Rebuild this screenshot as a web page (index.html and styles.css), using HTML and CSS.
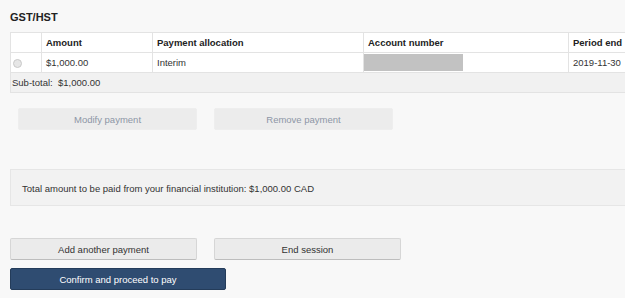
FILE: index.html
```html
<!DOCTYPE html>
<html lang="en">
<head>
    <meta charset="UTF-8">
    <meta name="viewport" content="width=device-width, initial-scale=1.0">
    <title>GST/HST payment</title>
    <link rel="stylesheet" href="styles.css">
</head>
<body>
    <div class="page">
        <h2>GST/HST</h2>
        <table class="payments">
            <thead>
                <tr>
                    <th class="col-select"></th>
                    <th class="col-amount">Amount</th>
                    <th class="col-alloc">Payment allocation</th>
                    <th class="col-account">Account number</th>
                    <th class="col-period">Period end</th>
                </tr>
            </thead>
            <tbody>
                <tr>
                    <td class="col-select"><span class="radio"></span></td>
                    <td>$1,000.00</td>
                    <td>Interim</td>
                    <td class="account"><span class="redacted"></span></td>
                    <td>2019-11-30</td>
                </tr>
                <tr class="subtotal">
                    <td colspan="5">Sub-total:&nbsp; $1,000.00</td>
                </tr>
            </tbody>
        </table>

        <div class="actions indent">
            <button class="btn" disabled>Modify payment</button>
            <button class="btn" disabled>Remove payment</button>
        </div>

        <div class="total">Total amount to be paid from your financial institution: $1,000.00 CAD</div>

        <div class="actions after-total">
            <button class="btn btn-wide">Add another payment</button>
            <button class="btn btn-wide">End session</button>
        </div>
        <div class="actions confirm-row">
            <button class="btn btn-primary">Confirm and proceed to pay</button>
        </div>
    </div>
</body>
</html>
```

FILE: styles.css
```css
body {
    margin: 0;
    background: #ffffff;
    font-family: 'Liberation Sans', Arial, sans-serif;
    font-size: 9.5px;
    color: #333333;
}
.page {
    width: 615px;
    height: 288px;
    padding: 10px 0 0 10px;
    background: #f8f8f8;
    overflow: hidden;
}
h2 {
    margin: 0 0 8px 0;
    font-size: 11px;
    line-height: 14px;
    font-weight: bold;
    color: #222222;
}
.payments {
    width: 680px;
    border-collapse: collapse;
    background: #ffffff;
}
.payments th,
.payments td {
    height: 19px;
    padding: 0 4px;
    border: 1px solid #e3e3e3;
    text-align: left;
    white-space: nowrap;
}
.payments th {
    font-weight: bold;
    color: #222222;
}
.col-select { width: 22px; }
.col-amount { width: 102px; }
.col-alloc { width: 202px; }
.col-account { width: 196px; }
.payments td.col-select {
    padding-left: 2px;
}
.payments td.account {
    padding: 0;
}
.redacted {
    display: block;
    width: 100px;
    height: 17px;
    margin-left: -1px;
    background: #c2c2c2;
}
.radio {
    display: inline-block;
    width: 7px;
    height: 7px;
    border: 1px solid #c9c9c9;
    border-radius: 50%;
    background: #e6e6e6;
    vertical-align: middle;
}
.payments .subtotal td {
    background: #f1f1f1;
    padding-left: 1px;
}
.actions {
    display: flex;
    gap: 17px;
    margin-top: 15px;
}
.indent {
    padding-left: 8px;
}
.btn {
    width: 179px;
    height: 22px;
    padding: 0;
    font-family: inherit;
    font-size: 9.5px;
    color: #333333;
    background: #ebebeb;
    border: 1px solid #d6d6d6;
    border-bottom-color: #bdbdbd;
    border-radius: 2px;
    cursor: pointer;
}
.btn:disabled {
    color: #8d96a6;
    background: #ececec;
    border-color: #eeeeee;
    cursor: default;
}
.btn-wide {
    width: 187px;
}
.btn-primary {
    width: 216px;
    color: #ffffff;
    background: #2f4c71;
    border-color: #243c5a;
}
.total {
    margin-top: 39px;
    height: 37px;
    line-height: 37px;
    padding-left: 11px;
    background: #f2f2f2;
    border: 1px solid #e6e6e6;
    border-right: none;
    box-sizing: border-box;
}
.after-total {
    margin-top: 32px;
}
.confirm-row {
    margin-top: 8px;
}
```
